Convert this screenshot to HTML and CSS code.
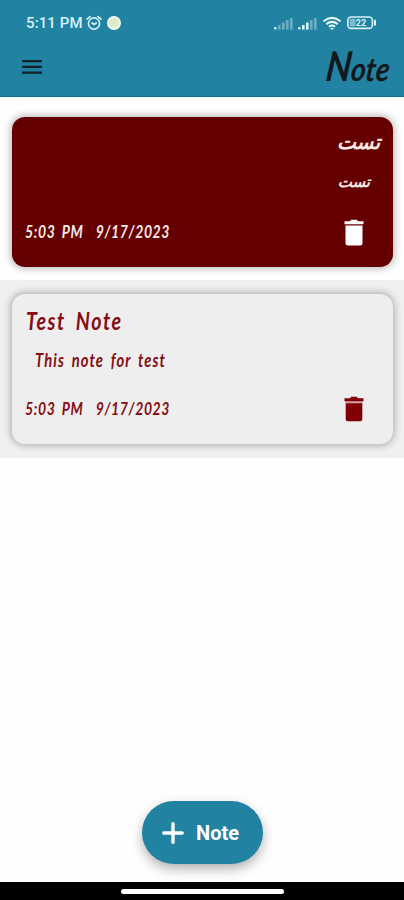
FILE: index.html
```html
<!DOCTYPE html>
<html lang="en">
<head>
    <meta charset="UTF-8">
    <meta name="viewport" content="width=device-width, initial-scale=1.0">
    <title>Note</title>
    <link rel="stylesheet" href="styles.css">
</head>
<body>

    <header>
        <div class="status-bar">
            <span class="clock">5:11 PM</span>
            <svg class="alarm" width="16" height="16" viewBox="0 0 16 16" fill="none" stroke="#d5f3f8" stroke-width="1.6" stroke-linecap="round">
                <circle cx="8" cy="8.5" r="5.6"/>
                <path d="M1 4.2 4 1.6M15 4.2 12 1.6M6 8l2 1.5L10.3 8"/>
            </svg>
            <span class="dot"></span>
            <svg class="signals" width="104" height="16" viewBox="0 0 104 16">
                <!-- SIM 1 -->
                <g fill="#d5f3f8">
                    <rect x="0" y="12" width="2.6" height="2.6" rx="1"/>
                    <g opacity=".4">
                        <rect x="4" y="10" width="2.6" height="4.6"/>
                        <rect x="8" y="7.5" width="2.6" height="7.1"/>
                        <rect x="12" y="5" width="2.6" height="9.6"/>
                        <rect x="16" y="3" width="2.6" height="11.6"/>
                    </g>
                </g>
                <!-- SIM 2 -->
                <g fill="#d5f3f8">
                    <rect x="24" y="12" width="2.6" height="2.6" rx="1"/>
                    <rect x="28" y="10" width="2.6" height="4.6"/>
                    <rect x="32" y="7.5" width="2.6" height="7.1"/>
                    <g opacity=".4">
                        <rect x="36" y="5" width="2.6" height="9.6"/>
                        <rect x="40" y="3" width="2.6" height="11.6"/>
                    </g>
                </g>
                <!-- Wi-Fi -->
                <g fill="none" stroke="#e4f8fb" stroke-width="2">
                    <path d="M49.5 6.3Q58 -.5 66.5 6.3M52.3 9.1Q58 4.6 63.7 9.1M54.9 11.7Q58 9.4 61.1 11.7"/>
                    <path d="M56.8 13.4 58 14.6 59.2 13.4Z" fill="#e4f8fb" stroke-width="1"/>
                </g>
                <!-- Battery -->
                <rect x="73.8" y="2" width="24.6" height="11.4" rx="3.4" fill="none" stroke="#d5f3f8" stroke-width="1.6"/>
                <rect x="75.6" y="3.8" width="6" height="7.8" rx="1.5" fill="#d5f3f8" opacity=".5"/>
                <path d="M101 5.6v4.2" stroke="#d5f3f8" stroke-width="2" stroke-linecap="round"/>
                <text x="87" y="11" class="battery-level">22</text>
            </svg>
        </div>
        <div class="toolbar">
            <svg width="20" height="14" viewBox="0 0 20 14" fill="#0e2229">
                <path d="M0 0h20v2.2H0zM0 5.8h20V8H0zM0 11.6h20v2.2H0z"/>
            </svg>
            <h1>Note</h1>
        </div>
    </header>

    <main>
        <section class="row">
            <article class="note note-dark">
                <div class="note-title" dir="rtl" lang="fa"><span>تست</span></div>
                <div class="note-text" dir="rtl" lang="fa"><span>تست</span></div>
                <div class="note-footer">
                    <span class="note-date">5:03 PM&nbsp; 9/17/2023</span>
                    <svg width="20" height="27" viewBox="0 0 20 27" fill="currentColor">
                        <path d="M.5 2.2H6L7.2.8h5.6L14 2.2h5.5v3H.5z"/>
                        <path d="M1.5 6.6h17v17.6a2.4 2.4 0 0 1-2.4 2.4H3.9a2.4 2.4 0 0 1-2.4-2.4z"/>
                    </svg>
                </div>
            </article>
        </section>
        <section class="row row-alt">
            <article class="note note-light">
                <div class="note-title"><span>Test Note</span></div>
                <div class="note-text"><span>This note for test</span></div>
                <div class="note-footer">
                    <span class="note-date">5:03 PM&nbsp; 9/17/2023</span>
                    <svg width="20" height="27" viewBox="0 0 20 27" fill="currentColor">
                        <path d="M.5 2.2H6L7.2.8h5.6L14 2.2h5.5v3H.5z"/>
                        <path d="M1.5 4h17v4h-17z" opacity=".3"/>
                        <path d="M1.7 7.2h16.6v15.8a2.2 2.2 0 0 1-2.2 2.2H3.9a2.2 2.2 0 0 1-2.2-2.2z"/>
                    </svg>
                </div>
            </article>
        </section>
    </main>

    <button class="add-note">
        <svg width="22" height="22" viewBox="0 0 22 22" stroke="#fff" stroke-width="3.4" stroke-linecap="round">
            <path d="M11 1.8v18.4M1.8 11h18.4"/>
        </svg>
        <span>Note</span>
    </button>

    <footer class="nav-bar"><span></span></footer>

</body>
</html>
```
FILE: styles.css
```css
* {
    box-sizing: border-box;
}

body {
    margin: 0;
    height: 900px;
    display: flex;
    flex-direction: column;
    background-color: #fefefe;
    font-family: Roboto, sans-serif;
    overflow: hidden;
}

header {
    height: 97px;
    background-color: #2182a2;
    border-bottom: 1px solid #14708f;
}

.status-bar {
    height: 45px;
    padding: 0 26px;
    display: flex;
    align-items: center;
}

.clock {
    color: #d5f3f8;
    font-size: 15px;
    font-weight: 500;
    letter-spacing: 0.1px;
    width: 60px;
    white-space: nowrap;
}

.dot {
    width: 14px;
    height: 14px;
    margin-left: 5px;
    border-radius: 50%;
    background-color: #dcebc6;
    border: 2px solid #eefbef;
}

.signals {
    margin-left: auto;
}

.battery-level {
    font: bold 9px Roboto, sans-serif;
    fill: #d5f3f8;
    text-anchor: middle;
}

.toolbar {
    height: 43px;
    padding: 0 14px 0 22px;
    display: flex;
    align-items: center;
    justify-content: space-between;
}

h1 {
    margin: 0;
    color: #11191c;
    font-family: Lato, sans-serif;
    font-size: 33px;
    font-weight: 700;
    font-style: italic;
    line-height: 43px;
    transform: scaleX(0.86) skewX(-8deg);
    transform-origin: right;
}

h1::first-letter {
    font-size: 41px;
}

.row {
    height: 183px;
    padding: 20px 11px 0 12px;
}

.row-alt {
    height: 178px;
    padding-top: 14px;
    background-color: #f0f0f0;
}

.note {
    height: 150px;
    padding: 10px 12px 0 13px;
    border-radius: 13px;
    box-shadow: 0 0 7px 2px rgba(0, 0, 0, 0.25);
    font-family: Lato, sans-serif;
    font-style: italic;
    font-weight: 700;
}

.note span {
    display: inline-block;
    white-space: nowrap;
    transform-origin: left;
}

.note-dark {
    background-color: #640000;
    color: #f8e9e2;
}

.note-light {
    background-color: #eee;
    color: #850d12;
}

.note-title {
    height: 34px;
    padding-left: 1px;
    line-height: 34px;
    font-size: 24px;
    letter-spacing: 1.9px;
    word-spacing: 5px;
}

.note-title span {
    transform: scaleX(0.82);
}

.note-text {
    height: 42px;
    padding: 0 10px;
    line-height: 45px;
    font-size: 18px;
    letter-spacing: 1.3px;
    word-spacing: 3px;
}

.note-text span {
    transform: scaleX(0.82);
}

.note [dir="rtl"] {
    font-family: "DejaVu Sans", sans-serif;
    font-weight: 700;
    letter-spacing: 0;
}

.note [dir="rtl"] span {
    transform: none;
}

.note-title[dir="rtl"] {
    padding-right: 1px;
    font-size: 20px;
    line-height: 30px;
}

.note-text[dir="rtl"] {
    padding-right: 11px;
    font-size: 15px;
    line-height: 43px;
}

.note-footer {
    height: 58px;
    padding-right: 17px;
    display: flex;
    align-items: center;
    justify-content: space-between;
}

.note-date {
    font-size: 16.5px;
    letter-spacing: 0.7px;
    word-spacing: 3px;
    transform: scaleX(0.85);
}

.note-dark svg {
    color: #fff;
}

.note-light svg {
    color: #800004;
}

.add-note {
    width: 121px;
    height: 63px;
    margin: auto auto 18px 142px;
    padding: 0 4px 0 0;
    display: flex;
    align-items: center;
    justify-content: center;
    gap: 12px;
    border: none;
    border-radius: 32px;
    background-color: #2182a2;
    box-shadow: 0 5px 12px rgba(0, 0, 0, 0.3);
    color: #fff;
    font-family: Roboto, sans-serif;
    font-size: 20px;
    font-weight: 700;
}

.nav-bar {
    height: 18px;
    display: flex;
    justify-content: center;
    align-items: center;
    background-color: #000;
}

.nav-bar span {
    width: 163px;
    height: 5px;
    border-radius: 3px;
    background-color: #fff;
}
```
